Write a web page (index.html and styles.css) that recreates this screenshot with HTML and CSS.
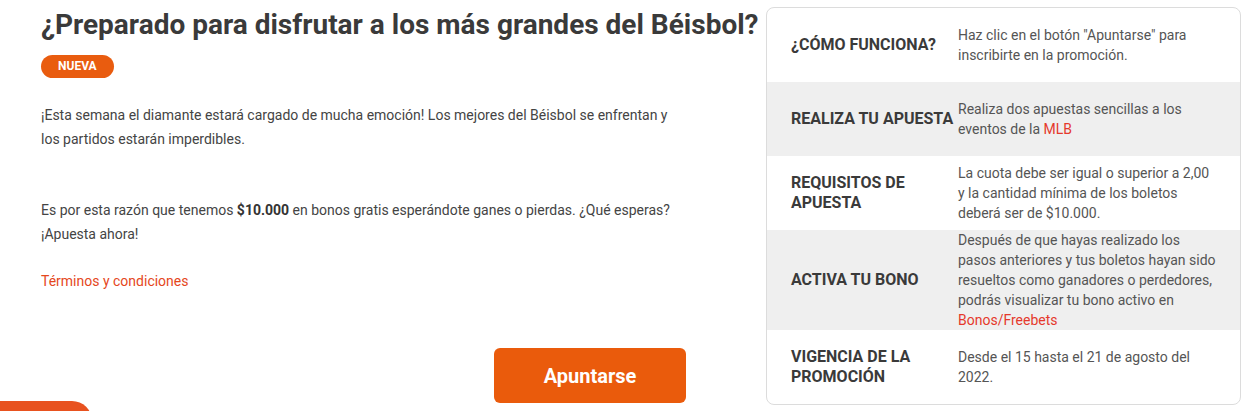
FILE: index.html
```html
<!DOCTYPE html>
<html lang="es">
<head>
  <meta charset="UTF-8">
  <meta name="viewport" content="width=device-width, initial-scale=1.0">
  <title>Promoción Béisbol</title>
  <link rel="stylesheet" href="styles.css">
</head>
<body>

  <main class="promo">
    <section class="promo-info">
      <h1>¿Preparado para disfrutar a los más grandes del Béisbol?</h1>
      <span class="badge">NUEVA</span>

      <p class="intro">¡Esta semana el diamante estará cargado de mucha emoción! Los mejores del Béisbol se enfrentan y los partidos estarán imperdibles.</p>
      <p class="offer">Es por esta razón que tenemos <strong>$10.000</strong> en bonos gratis esperándote ganes o pierdas. ¿Qué esperas? ¡Apuesta ahora!</p>

      <a href="#" class="terms">Términos y condiciones</a>

      <div class="actions">
        <button type="button">Apuntarse</button>
      </div>
    </section>

    <aside class="steps">
      <table>
        <tr>
          <th>¿CÓMO FUNCIONA?</th>
          <td>Haz clic en el botón "Apuntarse" para inscribirte en la promoción.</td>
        </tr>
        <tr class="alt">
          <th>REALIZA TU APUESTA</th>
          <td>Realiza dos apuestas sencillas a los eventos de la <a href="#">MLB</a></td>
        </tr>
        <tr>
          <th>REQUISITOS DE APUESTA</th>
          <td>La cuota debe ser igual o superior a 2,00 y la cantidad mínima de los boletos deberá ser de $10.000.</td>
        </tr>
        <tr class="alt">
          <th>ACTIVA TU BONO</th>
          <td>Después de que hayas realizado los pasos anteriores y tus boletos hayan sido resueltos como ganadores o perdedores, podrás visualizar tu bono activo en <a href="#">Bonos/Freebets</a></td>
        </tr>
        <tr>
          <th>VIGENCIA DE LA PROMOCIÓN</th>
          <td>Desde el 15 hasta el 21 de agosto del 2022.</td>
        </tr>
      </table>
    </aside>
  </main>

  <div class="chat-tab"></div>

</body>
</html>
```

FILE: styles.css
```css
body{
  margin: 0;
  font-family: Roboto, "Liberation Sans", sans-serif;
  background: #fff;
  color: #444;
}
.promo{
  display: flex;
  align-items: flex-start;
  gap: 80px;
  padding: 7px 0 0 41px;
}
.promo-info{
  width: 645px;
  flex: none;
}
h1{
  margin: 1px 0 13px;
  font-size: 28px;
  line-height: 34px;
  font-weight: 700;
  color: #3a3a3a;
  white-space: nowrap;
}
.badge{
  display: inline-block;
  height: 23px;
  line-height: 23px;
  padding: 0 17px;
  border-radius: 12px;
  background: #e95c0f;
  color: #fff;
  font-size: 12px;
  font-weight: 700;
}
.promo-info p{
  margin: 0;
  font-size: 14px;
  line-height: 24px;
}
.intro{
  padding-top: 25px;
}
.offer{
  padding-top: 47px;
}
.offer strong{
  color: #333;
}
.terms{
  display: block;
  margin-top: 23px;
  font-size: 14px;
  line-height: 24px;
  color: #e5471c;
  text-decoration: none;
}
.actions{
  display: flex;
  justify-content: flex-end;
  margin-top: 55px;
}
.actions button{
  width: 192px;
  height: 55px;
  border: none;
  border-radius: 6px;
  background: #ea5b0c;
  color: #fff;
  font-family: inherit;
  font-size: 20px;
  font-weight: 700;
  cursor: pointer;
}
.steps{
  width: 473px;
  flex: none;
  border: 1px solid #dcdcdc;
  border-radius: 8px;
  overflow: hidden;
}
.steps table{
  width: 100%;
  border-collapse: collapse;
}
.steps tr{
  height: 74px;
}
.steps tr.alt{
  background: #efefef;
}
.steps th{
  width: 167px;
  padding: 0 0 0 24px;
  text-align: left;
  font-size: 16px;
  line-height: 20px;
  font-weight: 700;
  color: #3a3a3a;
}
.steps td{
  padding: 0 22px 0 0;
  font-size: 14px;
  line-height: 20px;
  color: #555;
}
.steps a{
  color: #e5392c;
  text-decoration: none;
}
.chat-tab{
  position: fixed;
  left: -30px;
  top: 401px;
  width: 122px;
  height: 40px;
  border-radius: 20px;
  background: #e8521f;
}
```
